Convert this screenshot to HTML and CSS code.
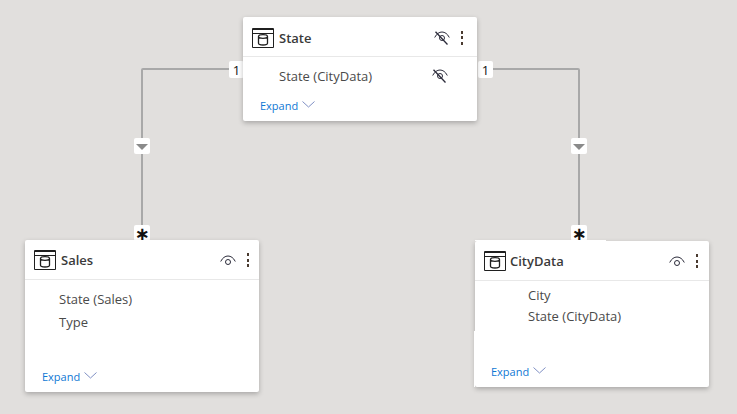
FILE: index.html
```html
<!DOCTYPE html>
<html lang="en">
<head>
<meta charset="utf-8">
<title>Model view</title>
<link rel="stylesheet" href="styles.css">
</head>
<body>
<svg width="0" height="0" class="defs">
  <defs>
    <symbol id="table" viewBox="0 0 22 20">
      <path d="M.5.5h21v19H.5z" fill="none" stroke="#1f1f1f"/>
      <path d="M.5 1.500h21M1 5.500h20" fill="none" stroke="#1f1f1f"/>
      <path d="M6.500 8.500c0-1 2-1.800 4.500-1.800s4.500.8 4.500 1.800v6.800c0 1-2 1.700-4.500 1.700s-4.500-.7-4.500-1.700zM6.500 8.500c0 1 2 1.800 4.500 1.800s4.500-.8 4.500-1.800" fill="none" stroke="#1f1f1f" stroke-width="1.300"/>
    </symbol>
    <symbol id="eye" viewBox="0 0 16 11">
      <path d="M.7 6.500C2.500 2.800 5.200 1 8 1s5.500 1.800 7.300 5.500" fill="none" stroke="#2b2b3a" stroke-width="1"/>
      <circle cx="8" cy="7" r="2.500" fill="none" stroke="#2b2b3a" stroke-width="1"/>
    </symbol>
    <symbol id="eye-off" viewBox="0 0 16 14">
      <path d="M.7 6.500C2.500 2.800 5.200 1 8 1s5.500 1.800 7.300 5.500" fill="none" stroke="#2b2b3a" stroke-width="1"/>
      <circle cx="8" cy="7" r="2.500" fill="none" stroke="#2b2b3a" stroke-width="1"/>
      <path d="M1.500.8 13.500 13.500" fill="none" stroke="#2b2b3a" stroke-width="1.300"/>
    </symbol>
    <symbol id="chev" viewBox="0 0 13 7">
      <path d="M.5.5l6 5.500 6-5.500" fill="none" stroke="#7f8fc4" stroke-width="1"/>
    </symbol>
  </defs>
</svg>
<main class="canvas">
  <svg class="lines" width="737" height="414">
    <path d="M232 69H143a1 1 0 0 0-1 1V232" fill="none" stroke="#a8a8a8" stroke-width="2"/>
    <path d="M490 69H578a1 1 0 0 1 1 1V232" fill="none" stroke="#a8a8a8" stroke-width="2"/>
  </svg>

  <span class="tag tag-one one-left">1</span>
  <span class="tag tag-one one-right">1</span>
  <span class="tag tag-arrow arrow-left"><i class="tri"></i></span>
  <span class="tag tag-arrow arrow-right"><i class="tri"></i></span>
  <span class="tag tag-star star-left">∗</span>
  <span class="tag tag-star star-right">∗</span>

  <section class="card card-state">
    <header class="head">
      <svg class="ico-table"><use href="#table"/></svg>
      <h2 class="title">State</h2>
      <svg class="ico-eye-off"><use href="#eye-off"/></svg>
      <span class="more"><i></i><i></i><i></i></span>
    </header>
    <ul class="fields fields-state">
      <li class="field">State (CityData)<svg class="ico-eye-off field-eye"><use href="#eye-off"/></svg></li>
    </ul>
    <footer class="expand">Expand<svg class="chev"><use href="#chev"/></svg></footer>
  </section>

  <section class="card card-sales">
    <header class="head">
      <svg class="ico-table"><use href="#table"/></svg>
      <h2 class="title">Sales</h2>
      <svg class="ico-eye"><use href="#eye"/></svg>
      <span class="more"><i></i><i></i><i></i></span>
    </header>
    <ul class="fields fields-sales">
      <li class="field">State (Sales)</li>
      <li class="field">Type</li>
    </ul>
    <footer class="expand">Expand<svg class="chev"><use href="#chev"/></svg></footer>
  </section>

  <section class="card card-city">
    <header class="head">
      <svg class="ico-table"><use href="#table"/></svg>
      <h2 class="title">CityData</h2>
      <svg class="ico-eye"><use href="#eye"/></svg>
      <span class="more"><i></i><i></i><i></i></span>
    </header>
    <ul class="fields fields-city">
      <li class="field">City</li>
      <li class="field">State (CityData)</li>
    </ul>
    <footer class="expand">Expand<svg class="chev"><use href="#chev"/></svg></footer>
  </section>
</main>
</body>
</html>
```
FILE: styles.css
```css
* { box-sizing: border-box; }
html, body { margin: 0; padding: 0; }
body { background: #e1dfdd; font-family: "Open Sans", "Noto Sans", sans-serif; overflow: hidden; }
.defs { position: absolute; }
.canvas { position: relative; width: 737px; height: 414px; }
.lines { position: absolute; left: 0; top: 0; }

.tag { position: absolute; display: flex; align-items: center; justify-content: center; background: #fff; border-radius: 2px; color: #111; }
.tag-one { width: 15px; height: 17px; top: 61px; font-size: 13px; }
.one-left { left: 229px; }
.one-right { left: 478px; }
.tag-arrow { width: 16px; height: 16px; top: 138px; }
.arrow-left { left: 134px; }
.arrow-right { left: 571px; }
.tri { width: 0; height: 0; margin-top: 1px; border-left: 6px solid transparent; border-right: 6px solid transparent; border-top: 6px solid #8a8a8a; }
.tag-star { width: 16px; height: 16px; top: 225px; padding-top: 2px; font-size: 18px; font-weight: 700; line-height: 14px; font-family: "DejaVu Sans", sans-serif; }
.star-left { left: 134px; }
.star-right { left: 571px; }

.card { position: absolute; width: 234px; display: flex; flex-direction: column; background: #fff; border-radius: 2px; box-shadow: 0 2px 5px rgba(0, 0, 0, .25); }
.card-state { left: 243px; top: 17px; height: 104px; }
.card-sales { left: 25px; top: 240px; height: 152px; }
.card-city { left: 475px; top: 241px; height: 146px; }
.card-city::before { content: ""; position: absolute; left: -1px; top: 90px; bottom: 0; width: 1px; background: #fff; }
.card-city::after { content: ""; position: absolute; left: 0; top: -1px; width: 131px; height: 1px; background: #fff; }

.head { display: flex; align-items: center; height: 40px; flex: none; padding: 1px 10px 0 9px; border-bottom: 1px solid #e8e8e8; }
.card-state .head { padding: 2px 14px 0 9px; }
.card-city .head { padding: 1px 11px 0 9px; }
.ico-table { width: 22px; height: 20px; flex: none; margin-right: 5px; }
.card-city .ico-table { margin-right: 4px; }
.title { flex: 1; margin: 0; font-size: 13px; font-weight: 600; color: #3a3a3a; line-height: 18px; }
.ico-eye { width: 16px; height: 11px; flex: none; margin-right: 11px; }
.ico-eye-off { width: 16px; height: 14px; flex: none; margin-right: 11px; }
.more { display: flex; flex-direction: column; gap: 2.500px; width: 2px; flex: none; }
.more i { display: block; width: 2px; height: 3px; background: #4a3b30; }

.fields { list-style: none; margin: 0; padding: 0; display: flex; flex-direction: column; flex: 1; font-size: 13px; color: #4a4a4a; }
.field { display: flex; align-items: center; justify-content: space-between; line-height: 16px; }
.fields-state { padding: 11px 29px 0 36px; }
.fields-sales { padding: 11px 0 0 34px; gap: 7px; }
.fields-city { padding: 6px 0 0 53px; gap: 5px; }
.field-eye { margin-right: 0; }

.expand { display: flex; align-items: flex-start; font-size: 11px; line-height: 15px; color: #0f78d4; flex: none; padding: 0 0 8px 17px; }
.card-city .expand { padding-left: 16px; }
.chev { width: 13px; height: 7px; margin: 3px 0 0 4px; }
```
